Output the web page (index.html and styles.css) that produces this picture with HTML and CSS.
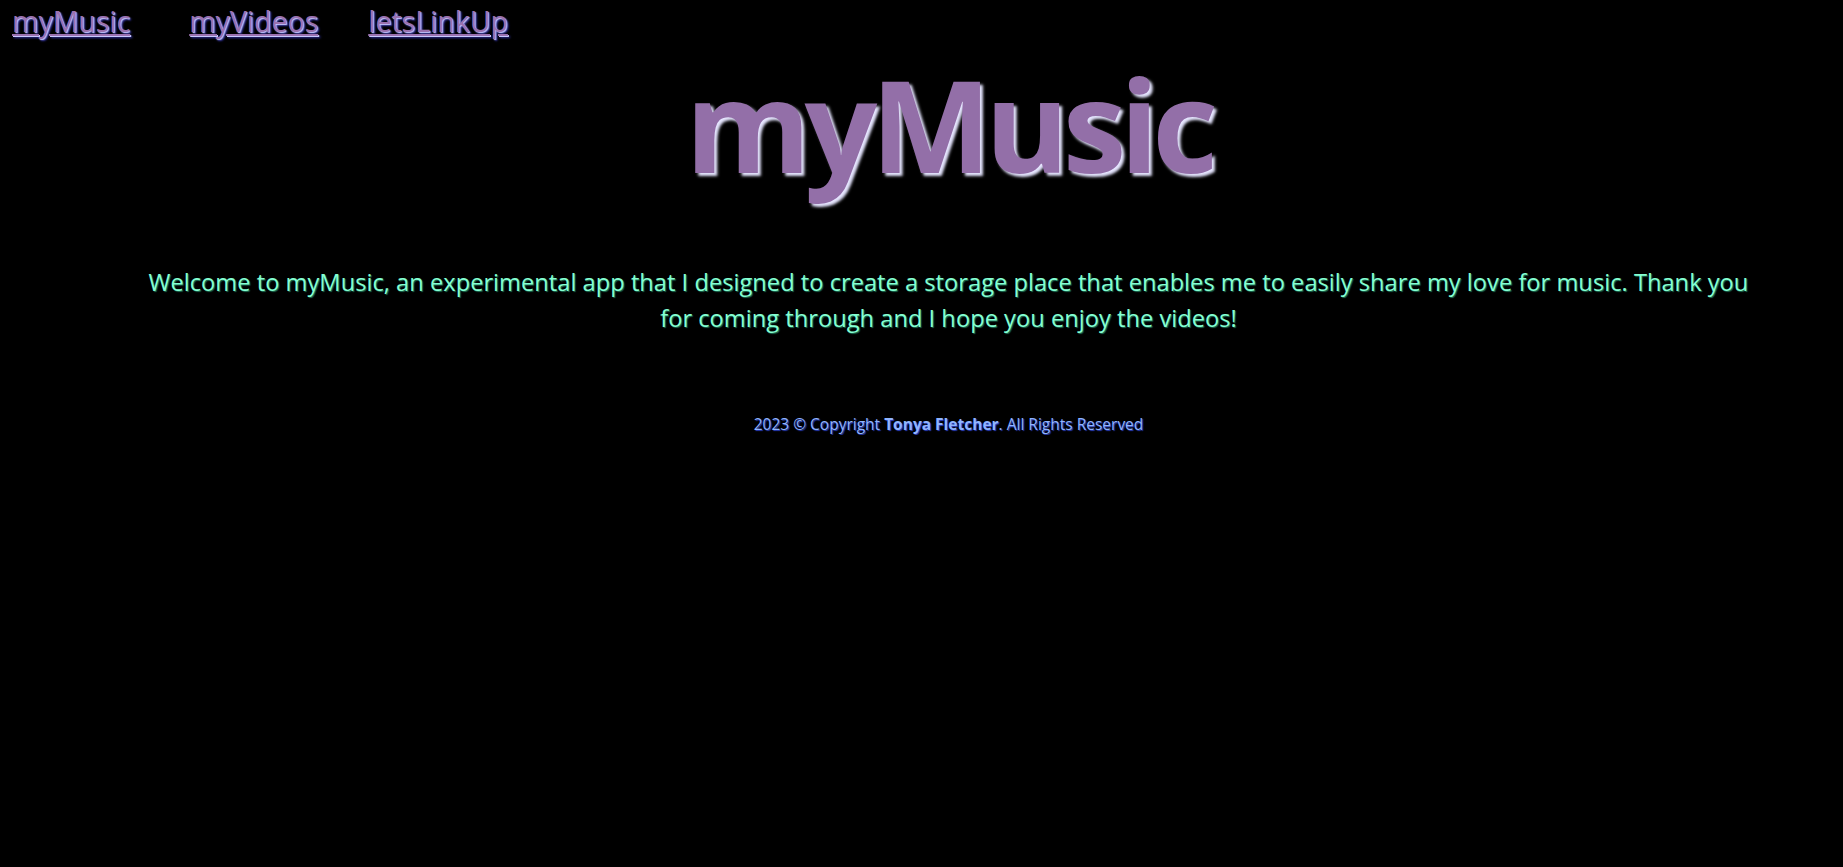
FILE: index.html
```html
<!DOCTYPE html>
<html lang="en">
<head>
<meta charset="utf-8">
<title>myMusic</title>
<link rel="stylesheet" href="styles.css">
</head>
<body>
<nav class="nav">
  <a class="nav-link" href="#">myMusic</a>
  <a class="nav-link nav-link-wide" href="#">myVideos</a>
  <a class="nav-link" href="#">letsLinkUp</a>
</nav>
<main class="main">
  <h1 class="title">myMusic</h1>
  <p class="intro">Welcome to myMusic, an experimental app that I designed to create a storage place that enables me to easily share my love for music. Thank you for coming through and I hope you enjoy the videos!</p>
  <footer class="footer">2023 &copy; Copyright <strong>Tonya Fletcher</strong>. All Rights Reserved</footer>
</main>
</body>
</html>
```

FILE: styles.css
```css
html, body {
  background: #000;
}
body {
  margin: 8px;
  font-family: "Open Sans", "Noto Sans", sans-serif;
}
.nav {
  display: flex;
  gap: 50px;
  padding-left: 4px;
  margin-top: -2px;
}
.nav-link {
  font-size: 28.5px;
  line-height: 30px;
  color: #9a72b0;
  text-decoration: underline;
  text-shadow: 1px 1px 1px #c8c8ff, 2px 2px 2px #3030a0;
}
.nav-link-wide {
  margin-left: 9px;
}
.main {
  padding-left: 54px;
  text-align: center;
}
.title {
  margin: 8px 0 0;
  font-size: 128px;
  line-height: 160px;
  font-weight: 700;
  color: #936fa8;
  letter-spacing: -6.5px;
  text-shadow: 3px 3px 3px #e6e6ff;
}
.intro {
  margin: 60px 70px 0;
  font-size: 23.7px;
  line-height: 36px;
  color: #84ffd2;
  text-shadow: 1px 1px 1px #1d6f55;
}
.footer {
  margin-top: 77px;
  font-size: 15.5px;
  color: #8fb4ff;
  text-shadow: 1px 1px 1px #2a3fc0;
}
.footer strong {
  font-weight: 700;
}
```
